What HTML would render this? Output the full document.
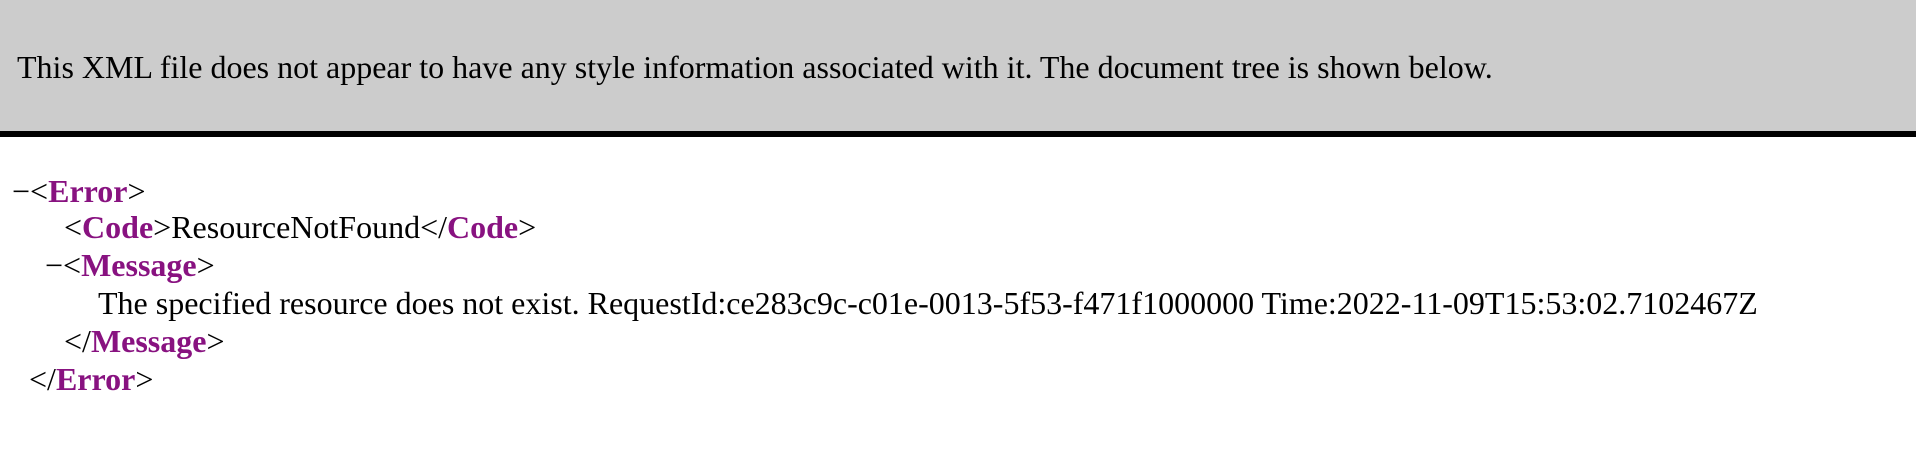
<!DOCTYPE html>
<html><head><style>
body{margin:0;width:1916px;height:452px;background:#fff;font-family:"Liberation Serif",serif;color:#000;position:relative;overflow:hidden}
.hdr{position:absolute;left:0;top:0;width:1916px;height:131px;background:#ccc;border-bottom:6px solid #000}
.hdr span{position:absolute;left:17px;top:48px;line-height:38px;white-space:nowrap;font-size:32px}
.l{position:absolute;white-space:nowrap;line-height:38px;font-size:32px}
b{color:#881280}
</style></head><body>
<div class="hdr"><span>This XML file does not appear to have any style information associated with it. The document tree is shown below.</span></div>
<div class="l" style="left:12px;top:172px">−&lt;<b>Error</b>&gt;</div>
<div class="l" style="left:64px;top:208px">&lt;<b>Code</b>&gt;ResourceNotFound&lt;/<b>Code</b>&gt;</div>
<div class="l" style="left:45px;top:246px">−&lt;<b>Message</b>&gt;</div>
<div class="l" style="left:98px;top:284px">The specified resource does not exist. RequestId:ce283c9c-c01e-0013-5f53-f471f1000000 Time:2022-11-09T15:53:02.7102467Z</div>
<div class="l" style="left:64px;top:322px">&lt;/<b>Message</b>&gt;</div>
<div class="l" style="left:29px;top:360px">&lt;/<b>Error</b>&gt;</div>
</body></html>
